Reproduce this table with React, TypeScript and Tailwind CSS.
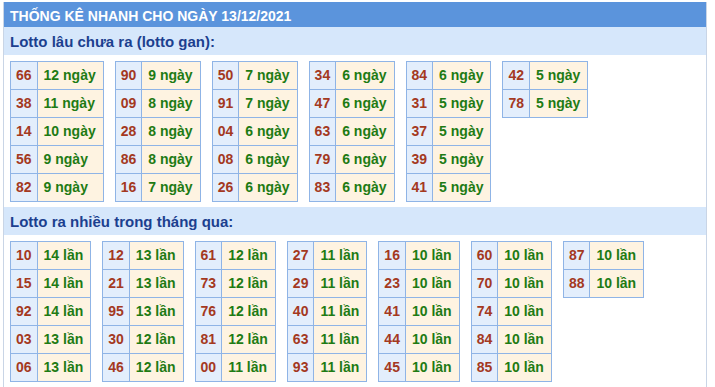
const ganData: [string, string][][] = [
  [['66', '12 ngày'], ['38', '11 ngày'], ['14', '10 ngày'], ['56', '9 ngày'], ['82', '9 ngày']],
  [['90', '9 ngày'], ['09', '8 ngày'], ['28', '8 ngày'], ['86', '8 ngày'], ['16', '7 ngày']],
  [['50', '7 ngày'], ['91', '7 ngày'], ['04', '6 ngày'], ['08', '6 ngày'], ['26', '6 ngày']],
  [['34', '6 ngày'], ['47', '6 ngày'], ['63', '6 ngày'], ['79', '6 ngày'], ['83', '6 ngày']],
  [['84', '6 ngày'], ['31', '5 ngày'], ['37', '5 ngày'], ['39', '5 ngày'], ['41', '5 ngày']],
  [['42', '5 ngày'], ['78', '5 ngày']],
]

const nhieuData: [string, string][][] = [
  [['10', '14 lần'], ['15', '14 lần'], ['92', '14 lần'], ['03', '13 lần'], ['06', '13 lần']],
  [['12', '13 lần'], ['21', '13 lần'], ['95', '13 lần'], ['30', '12 lần'], ['46', '12 lần']],
  [['61', '12 lần'], ['73', '12 lần'], ['76', '12 lần'], ['81', '12 lần'], ['00', '11 lần']],
  [['27', '11 lần'], ['29', '11 lần'], ['40', '11 lần'], ['63', '11 lần'], ['93', '11 lần']],
  [['16', '10 lần'], ['23', '10 lần'], ['41', '10 lần'], ['44', '10 lần'], ['45', '10 lần']],
  [['60', '10 lần'], ['70', '10 lần'], ['74', '10 lần'], ['84', '10 lần'], ['85', '10 lần']],
  [['87', '10 lần'], ['88', '10 lần']],
]

function StatTable({ rows }: { rows: [string, string][] }) {
  return (
    <table className="border-collapse self-start">
      <tbody>
        {rows.map(([num, label]) => (
          <tr key={num} className="h-[28px]">
            <td className="border border-[#8fb4e6] bg-[#e3eefc] px-[5px] text-center text-[#a4391f]">{num}</td>
            <td className="border border-[#8fb4e6] bg-[#fef3e1] pl-[6px] pr-[7px] text-left text-[#1e7b14]">{label}</td>
          </tr>
        ))}
      </tbody>
    </table>
  )
}

function Section({ title, groups }: { title: string; groups: [string, string][][] }) {
  return (
    <div>
      <div className="h-[28px] bg-[#d6e7fb] pl-[6px] pt-[4px] text-[15px] font-bold text-[#1c3f8f]">{title}</div>
      <div className="flex flex-wrap items-start gap-[11px] pl-[6px] pt-[6px] pb-[5px] text-[14px] font-bold">
        {groups.map((g, i) => (
          <StatTable key={i} rows={g} />
        ))}
      </div>
    </div>
  )
}

export default function App() {
  return (
    <div className="h-[387px] bg-white pt-[2px] font-['Liberation_Sans',Arial,sans-serif]">
      <div className="ml-[3px] w-[704px] border-x border-[#c9d5e6] pb-[4px]">
        <div className="h-[25px] bg-[#5b94dc] pl-[6px] pt-[4px] text-[14px] font-bold text-white">
          THỐNG KÊ NHANH CHO NGÀY 13/12/2021
        </div>
        <Section title="Lotto lâu chưa ra (lotto gan):" groups={ganData} />
        <Section title="Lotto ra nhiều trong tháng qua:" groups={nhieuData} />
      </div>
    </div>
  )
}
